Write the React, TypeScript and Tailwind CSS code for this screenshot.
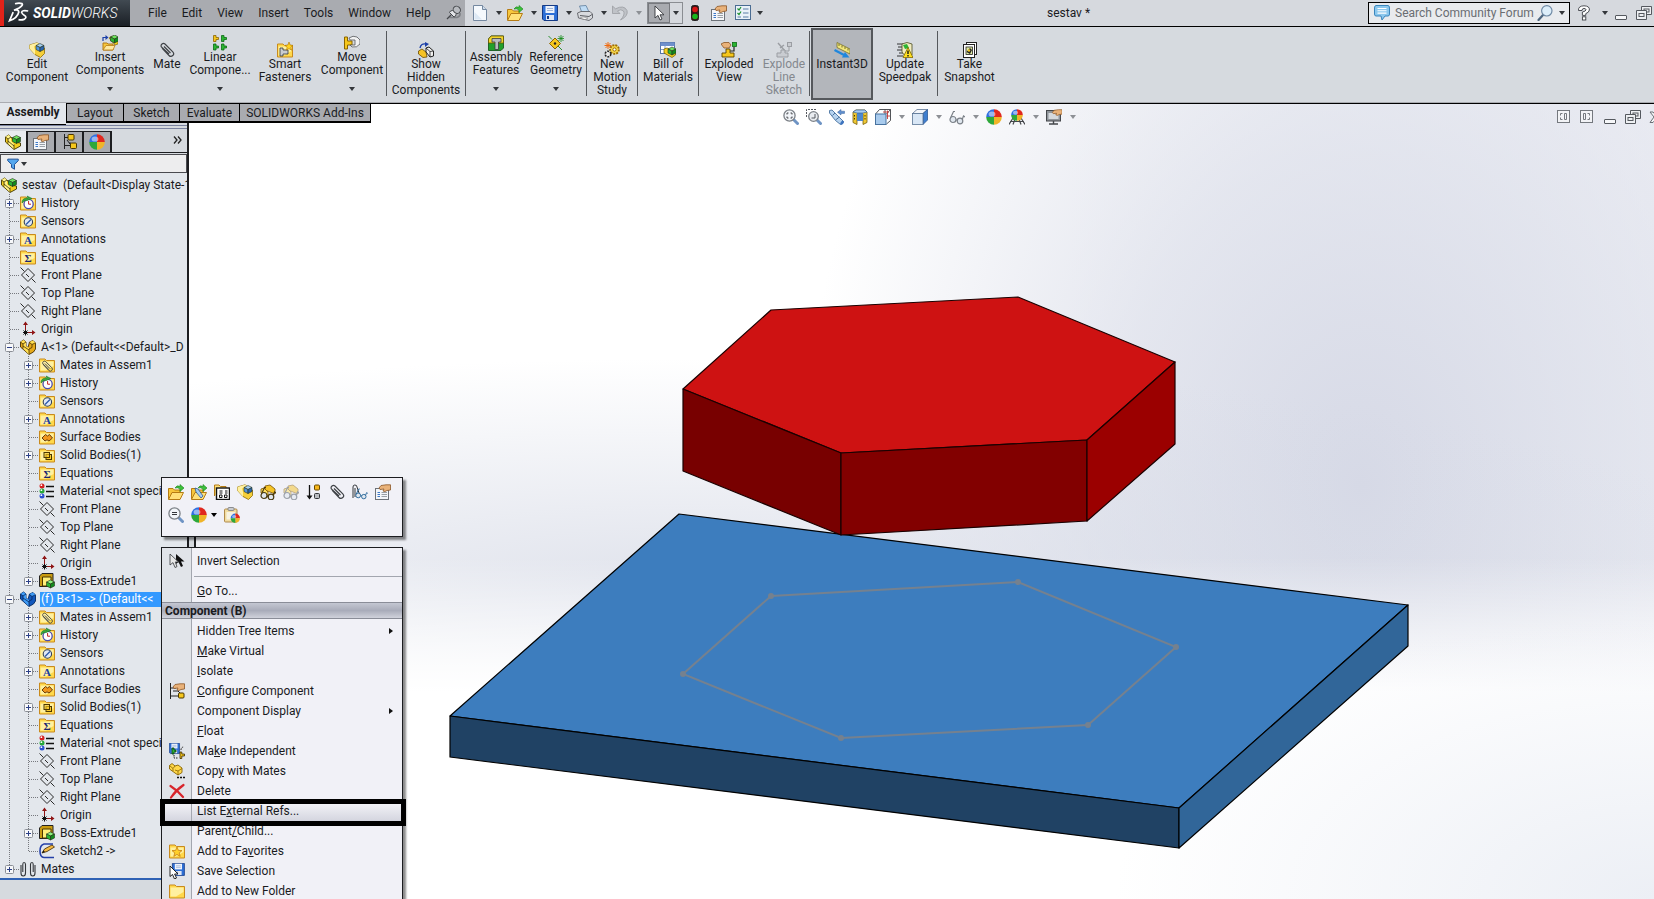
import { useState } from "react";
import type { ReactNode } from "react";

const partBody = "M0.5 3 L3.5 1 L6 3 V7 L8 8.5 L9.5 3 L13 1.5 L15.5 4 V10 L13.5 13 L9 15.5 L0.5 8 Z";

function Bracket({ light, mid, dark }: { light: string; mid: string; dark: string }) {
  return (
    <>
      <path d={partBody} fill={mid} stroke={dark} strokeWidth="0.9" />
      <path d="M0.5 3 L3.5 1 L6 3 V7 L9 9 V15.5 L3 9.5 V5 Z" fill={light} />
      <path d="M9.5 3 L13 1.5 L15.5 4 L12 5.5 Z" fill={light} />
      <path d="M0.5 3 L3 5 V9.5 M3 5 L6 3 M9 15 V10 L12 8.5 V5.5 L15 4 M12 5.5 L9.5 3.5 M3 7 L9 11" fill="none" stroke={dark} strokeWidth="0.8" />
    </>
  );
}

function Folder({ children }: { children?: ReactNode }) {
  return (
    <>
      <path d="M0.5 15 V2 H6 L7.5 3.5 H15.5 V15 Z" fill="#ffd84a" stroke="#c98a1c" />
      <path d="M1.5 13.5 V4.5 H14.5 V9 L7 13.5 Z" fill="#fff0a0" />
      {children}
    </>
  );
}

function Cube({ top, side, front, x = 0, y = 0 }: { top: string; side: string; front: string; x?: number; y?: number }) {
  return (
    <g transform={`translate(${x} ${y})`} stroke="#27331f" strokeWidth="0.6">
      <path d="M0 2 L4 0 L8 2 L4 4 Z" fill={top} />
      <path d="M0 2 L4 4 V8 L0 6 Z" fill={front} />
      <path d="M8 2 L4 4 V8 L8 6 Z" fill={side} />
    </g>
  );
}

function Ball() {
  return (
    <>
      <path d="M8 8 V0.2 A7.8 7.8 0 0 0 0.2 8 Z" fill="#2f6fe0" />
      <path d="M8 8 V0.2 A7.8 7.8 0 0 1 15.8 8 Z" fill="#e0281e" />
      <path d="M8 8 H15.8 A7.8 7.8 0 0 1 8 15.8 Z" fill="#f0b428" />
      <path d="M8 8 H0.2 A7.8 7.8 0 0 0 8 15.8 Z" fill="#2ea83a" />
      <ellipse cx="6" cy="5" rx="3.4" ry="2.6" fill="#fff" opacity="0.5" />
    </>
  );
}

function Hand() {
  return (
    <path
      d="M4 4 L6 1.5 L11 0.8 H15.5 V6 L12 6.5 L10 7.5 L8 7 L9 5 L5 5.5 Z"
      fill="#e9b27a"
      stroke="#8a5526"
      strokeWidth="0.8"
    />
  );
}

const plane = (
  <g fill="none" stroke="#2a2a2a">
    <path d="M1.5 8 L8 1.5 L14.5 8 L8 14.5 Z" />
    <path d="M0.5 0.5 L4.5 4.5 M11.5 11.5 L15.5 15.5 M6 7 L9 10" />
  </g>
);

const clip = (
  <g fill="none" stroke="#3f4246" strokeWidth="1.2">
    <path d="M3 6 L10 13.5 A2.6 2.6 0 0 0 13.8 9.8 L6 2 A2.4 2.4 0 0 0 2.4 5 L10 12 M5 4.5 L11.5 11" />
  </g>
);

const openFolder = (
  <>
    <path d="M0.5 15 V4.5 H5 L6.5 6 H12 V8" fill="#f6c63c" stroke="#b57b14" />
    <path d="M0.5 15.5 L4 8.5 H15.5 L12 15.5 Z" fill="#ffe17a" stroke="#b57b14" />
    <path d="M7 4 Q9 0.5 12 2.5 V0.5 L16 4 L12 7.5 V5 Q9.5 3 7 4 Z" fill="#3cc13b" stroke="#1b7f1c" strokeWidth="0.6" />
  </>
);

const disk = (
  <>
    <path d="M0.5 0.5 H15.5 V15.5 H2 L0.5 14 Z" fill="#2d6fd6" stroke="#153b86" />
    <rect x="3.5" y="1" width="9" height="7" fill="#eef3fb" />
    <path d="M5 3.5 H11 M5 5.5 H11" stroke="#8aa4cf" strokeWidth="0.8" />
    <rect x="4" y="10" width="8" height="5" fill="#dfe6f2" />
    <rect x="5" y="11" width="2" height="3" fill="#153b86" />
  </>
);

const pair = (
  <g stroke="#7a5200" strokeWidth="0.8">
    <path d="M5 2 L10 1 L15 5 V10 L10 8 L5 6 Z" fill="#f5c326" />
    <path d="M1 5 L4 4 L8 8 V13 L4 12 L1 9 Z" fill="#ffdf5e" />
  </g>
);

const glasses = (c: string) => (
  <g fill="#dfe6ee" stroke={c} strokeWidth="1.2">
    <circle cx="4" cy="10.5" r="3" />
    <circle cx="11" cy="12" r="2.8" />
    <path d="M1.5 9 L4.5 2.5 H6 M7 11 H8.5 M13.2 10.5 L14.5 7 L16 8" fill="none" />
  </g>
);

const loupe = (inner: ReactNode) => (
  <>
    <path d="M10.5 10.5 L14.5 14.5" stroke="#6f94c4" strokeWidth="3" strokeLinecap="round" />
    <circle cx="6.5" cy="6.5" r="5.6" fill="#f2f5f9" stroke="#7c8187" strokeWidth="1.3" />
    {inner}
  </>
);

const sheet = (
  <>
    <rect x="0.5" y="4.5" width="13" height="11" fill="#f4f6f9" stroke="#6d7278" />
    <path d="M2.5 8.5 H5 M2.5 10.5 H5 M2.5 12.5 H5" stroke="#3b78c8" />
    <path d="M6.5 8.5 H12 M6.5 10.5 H12 M6.5 12.5 H12" stroke="#9aa0a6" />
    <Hand />
  </>
);

const icons: Record<string, ReactNode> = {
  assembly: (
    <>
      <path d="M0.5 3 L3.5 1 L7 4 L9 8 L15.5 9 V12 L9 15.5 L0.5 8 Z" fill="#f3ce1f" stroke="#403400" strokeWidth="0.9" />
      <path d="M0.5 3 L3.5 1 L6 3 V7 L9 10 V15 L3 9.5 V5 Z" fill="#fff38a" />
      <path d="M0.5 3 L3 5 V9.5 M3 5 L6 3 M9 15 V10.5 M3 7 L9 12" fill="none" stroke="#403400" strokeWidth="0.8" />
      <Cube x={7.5} y={1.5} top="#6ee05e" side="#128a1c" front="#2bb532" />
    </>
  ),
  part: <Bracket light="#ffdf52" mid="#e5a91a" dark="#463000" />,
  partBlue: <Bracket light="#3f9bf5" mid="#1358bd" dark="#06285e" />,
  editComponent: (
    <>
      <path d="M0.5 3 L8 0.8 L15.5 6 V11.5 L11.5 15.5 L6 12.5 L0.5 6.5 Z" fill="#f5cf3a" stroke="#8a6a08" strokeWidth="0.8" />
      <path d="M0.5 3 L8 0.8 L10 2 L5 4.5 L6 8 V12.5 L0.5 6.5 Z" fill="#fff0a0" />
      <Cube x={7} y={1.5} top="#a7d0f5" side="#2a66b0" front="#5295dc" />
    </>
  ),
  insert: (
    <>
      <path d="M1 15 V8 H5 L6 9 H11 V15 Z" fill="#f6c63c" stroke="#b57b14" />
      <path d="M1 15 L4 10.5 H13 L11 15 Z" fill="#ffe9a0" stroke="#b57b14" strokeWidth="0.8" />
      <path d="M1 6 V2.5 H4" fill="none" stroke="#1c3fa8" strokeWidth="1.2" />
      <path d="M3.5 0 L6.5 2.5 L3.5 5 Z" fill="#1c3fa8" />
      <path d="M7 3 L10 1 L16 5 V9 L13 10 Z" fill="#f3ce1f" stroke="#6a5400" strokeWidth="0.6" />
      <Cube x={8.5} y={0} top="#6ee05e" side="#128a1c" front="#2bb532" />
    </>
  ),
  clip,
  pattern: (
    <g strokeWidth="0.8">
      <path d="M1.5 0.5 H4 V2.5 H6.5 V4.5 H4 V6.5 H1.5 Z" fill="#f6c71d" stroke="#8a6400" />
      <path d="M9.5 0.5 H12 V2.5 H14.5 V4.5 H12 V6.5 H9.5 Z" fill="#2bb532" stroke="#0c6b14" />
      <path d="M1.5 9 H4 V11 H6.5 V13 H4 V15 H1.5 Z" fill="#2bb532" stroke="#0c6b14" />
      <path d="M9.5 9 H12 V11 H14.5 V13 H12 V15 H9.5 Z" fill="#2bb532" stroke="#0c6b14" />
    </g>
  ),
  fastener: (
    <>
      <Folder />
      <path d="M3 6 H6 V8 H11 V12 H6 V14 H3 Z" fill="#c9ccd0" stroke="#33363a" strokeWidth="0.8" />
      <path d="M12 0 L13.2 3 L16 3.4 L13.8 5.4 L14.6 8.2 L12 6.6 L9.4 8.2 L10.2 5.4 L8 3.4 L10.8 3 Z" fill="#ffd21f" stroke="#a86f00" strokeWidth="0.6" />
    </>
  ),
  move: (
    <>
      <path d="M0.5 2 H3.5 V6 H8 V10 H3.5 V14 H0.5 Z" fill="#f6c71d" stroke="#8a6400" />
      <path d="M5 3 Q9 0 13 2 L16 5 V9 Q13 13 8 12 L6 10 H11 V5 H6 Z" fill="#f1f1f1" stroke="#55585c" strokeWidth="0.8" />
    </>
  ),
  showHidden: (
    <>
      <path d="M2 6 Q3 1 8 2" fill="none" stroke="#1c3fa8" strokeWidth="1.4" />
      <path d="M7 0 L11 2 L7 5 Z" fill="#1c3fa8" />
      <path d="M0.5 9 L4 7 L8 10 L9 15 L5 15.5 L0.5 12 Z" fill="#f5c326" stroke="#6a4a00" strokeWidth="0.8" />
      <path d="M8 6 L11 5 L15.5 9 V14 L12 15 L8 10 Z" fill="#eee" stroke="#222" />
      <path d="M8 6 L12 9.5 V15 M12 9.5 L15.5 9" fill="none" stroke="#222" strokeWidth="0.8" />
    </>
  ),
  asmFeatures: (
    <>
      <path d="M0.5 4 L3 1 H15.5 V13 L13 15.5 H0.5 Z" fill="#22a02a" stroke="#0a4e10" strokeWidth="0.8" />
      <path d="M0.5 8 V4 L3 1 H15.5 V8 Z" fill="#f3d62d" stroke="#6a5400" strokeWidth="0.8" />
      <path d="M4 3.5 H13 V7 H10.5 V14.5 H7 V7 H4 Z" fill="#b9bcc0" stroke="#3a3d40" strokeWidth="0.8" />
    </>
  ),
  refGeometry: (
    <>
      <path d="M7 3 L12.5 8.5 L7 14 L1.5 8.5 Z" fill="#f6c71d" stroke="#8a6400" />
      <path d="M0.5 1 L4 4.5 M10 11 L14 15" stroke="#2a8f2e" />
      <path d="M13 0 V7 M9.5 3.5 H16 M10.5 1 L15.5 6 M15.5 1 L10.5 6" stroke="#138a18" strokeWidth="0.8" />
      <circle cx="7" cy="8.5" r="1.2" fill="#222" />
    </>
  ),
  motion: (
    <>
      <circle cx="10.5" cy="7.5" r="4.4" fill="#f6d64a" stroke="#9c6c00" strokeWidth="1.8" strokeDasharray="2 1" />
      <circle cx="10.5" cy="7.5" r="1.6" fill="#fff" stroke="#9c6c00" />
      <circle cx="4" cy="12" r="2.8" fill="#e8e8e8" stroke="#222" strokeWidth="1.6" strokeDasharray="2 1" />
      <path d="M4 0 V7 M0.5 3.5 H7.5 M1.5 1 L6.5 6 M6.5 1 L1.5 6" stroke="#f06a10" />
    </>
  ),
  bom: (
    <>
      <rect x="0.5" y="0.5" width="14" height="11" fill="#fff" stroke="#5573a8" />
      <rect x="0.5" y="0.5" width="14" height="3.5" fill="#6f90cc" />
      <path d="M5 4 V11 M1 7.5 H14" stroke="#8aa0c4" />
      <path d="M4 7 L7 6 L15.5 10 V13 L12 15.5 L4 11 Z" fill="#f3ce1f" stroke="#6a5400" strokeWidth="0.7" />
      <Cube x={8} y={5} top="#6ee05e" side="#128a1c" front="#2bb532" />
    </>
  ),
  exploded: (
    <>
      <path d="M0 2 L3 0.5 H8 L10 3 L8 6 H3 Z" fill="#e9b27a" stroke="#8a5526" strokeWidth="0.8" />
      <rect x="11.5" y="0.5" width="4" height="4" fill="#2bb532" stroke="#0c6b14" strokeWidth="0.8" />
      <path d="M13 5 V9 H9" fill="none" stroke="#222" strokeWidth="1.2" />
      <path d="M5 7 H9 V11 H13 V15 H1 V11 H5 Z" fill="#f6c71d" stroke="#5a4300" strokeWidth="0.9" />
    </>
  ),
  explodeLine: (
    <g fill="#c9ccd1" stroke="#9b9ea3">
      <path d="M2 1 L9 9 M4 6 L8 3" fill="none" strokeWidth="1.4" />
      <rect x="11.5" y="0.5" width="4" height="4" />
      <path d="M13 5 V9 H9" fill="none" />
      <path d="M5 8 H9 V11 H12 V15 H1 V11 H5 Z" />
    </g>
  ),
  instant3d: (
    <>
      <path d="M3 0.5 L16 7 V12 L3 5.5 Z" fill="#f2e77a" stroke="#77702a" strokeWidth="0.8" />
      <path d="M5 2 V4 M8 3.5 V5.5 M11 5 V7 M14 6.5 V8.5" stroke="#55501e" strokeWidth="0.8" />
      <path d="M0.5 8 L10 13" stroke="#1f87dd" strokeWidth="2.4" />
      <path d="M8 15.5 L15.5 15.5 L11 10 Z" fill="#1f87dd" />
    </>
  ),
  speedpak: (
    <>
      <path d="M0 2 H6 M1 5 H6 M0 8 H6 M2 11 H6 M0 14 H6" stroke="#222" strokeWidth="0.9" />
      <path d="M5 2 L10 0.5 L15 2 V13 L8 14 L5 10 Z" fill="#f1ecc0" stroke="#4a4a20" strokeWidth="0.8" />
      <path d="M6 3 L10 2 L12 6 L8 7 Z" fill="#2bb532" />
      <path d="M11 5.5 L16 15.5 H6 Z" fill="#ffe01f" stroke="#806800" strokeWidth="0.8" />
      <path d="M11 8.5 V12 M11 13 V14.4" stroke="#111" strokeWidth="1.4" />
    </>
  ),
  snapshot: (
    <>
      <rect x="4.5" y="0.5" width="10" height="12" fill="#fff" stroke="#222" />
      <rect x="1.5" y="2.5" width="11" height="13" fill="#fff" stroke="#222" />
      <rect x="4" y="5" width="6.5" height="7.5" fill="#dfe9a0" stroke="#222" strokeWidth="0.8" />
      <path d="M4.5 10 L8 6 L10 8 L8 12 Z" fill="#222" />
      <circle cx="7" cy="8.5" r="1.2" fill="#f6c71d" />
    </>
  ),
  newDoc: (
    <>
      <path d="M1.5 0.5 H10.5 L14.5 4.5 V15.5 H1.5 Z" fill="#f5f9fd" stroke="#7488a0" />
      <path d="M10.5 0.5 V4.5 H14.5" fill="#cfdcea" stroke="#7488a0" />
      <path d="M2.5 14.5 V7 L10 14.5 Z" fill="#dce8f4" />
    </>
  ),
  openFolder,
  disk,
  printer: (
    <>
      <path d="M2.5 1 L9 0.5 L12 7 L5 8 Z" fill="#bfdcf5" stroke="#5f7d9c" strokeWidth="0.8" />
      <path d="M0.5 8 L4 6.5 H13 L15.5 9 V13 L12 15.5 L1.5 13 Z" fill="#d8dade" stroke="#5d6065" strokeWidth="0.9" />
      <path d="M3 10.5 L12 11.5 L15 9.5" fill="none" stroke="#5d6065" />
      <path d="M3 13 L8 14.5 L11 13 L6 12 Z" fill="#fff" stroke="#777" strokeWidth="0.5" />
    </>
  ),
  undo: (
    <path d="M0.5 1 V8.5 H8 L5.5 6 Q9 3.5 11.5 6 Q13.5 9.5 8.5 15 Q16.5 11 15 5.5 Q12 -0.5 3.5 3.8 Z" fill="#bfc2c7" stroke="#9a9da2" strokeWidth="0.8" />
  ),
  cursor: (
    <path d="M4 1 V13 L7 10.4 L9 15 L11 14 L9 9.8 H13 Z" fill="#fff" stroke="#33363a" strokeWidth="0.9" />
  ),
  light: (
    <>
      <rect x="4.5" y="0.5" width="7" height="15" rx="2" fill="#3a1414" stroke="#222" />
      <circle cx="8" cy="4.5" r="2.8" fill="#d81616" />
      <circle cx="8" cy="11.5" r="2.8" fill="#18b81e" />
    </>
  ),
  sheet,
  options: (
    <>
      <rect x="0.5" y="0.5" width="15" height="14" fill="#e9f1f8" stroke="#4a6c92" />
      <path d="M2.5 3.5 L4 5 L6 2 M2.5 8 L4 9.5 L6 6.5" fill="none" stroke="#1b8f2c" strokeWidth="1.2" />
      <path d="M8 4 H13.5 M8 8 H13.5 M8 12 H13.5 M2.5 12 H6" stroke="#5b7ea6" strokeWidth="1.2" />
    </>
  ),
  pin: (
    <>
      <path d="M3.5 12.5 H11 Q14.5 11.5 14 8" fill="none" stroke="#7d8085" strokeWidth="1.6" />
      <path d="M1 14 L5 10" stroke="#44474b" strokeWidth="1.2" />
      <path d="M3.5 7.5 L8 12 Q10 11.5 10 9.5 L13.5 6 Q13.5 2.5 10 2 L6.5 5.5 Q4 5.5 3.5 7.5 Z" fill="#e3e5e8" stroke="#44474b" />
      <ellipse cx="10.8" cy="4.8" rx="3.4" ry="3.8" fill="#b8bbc0" stroke="#44474b" transform="rotate(-45 10.8 4.8)" />
    </>
  ),
  bubble: (
    <>
      <path d="M2 0.5 H14 Q15.5 0.5 15.5 3 V9 Q15.5 11 14 11 H11 L8 15 L7 11 H2 Q0.5 11 0.5 9 V3 Q0.5 0.5 2 0.5 Z" fill="#8cc8ee" stroke="#3a86bd" />
      <path d="M3.5 3.5 H12.5 M3.5 5.8 H12.5 M3.5 8.1 H12.5" stroke="#fff" strokeWidth="1.1" />
    </>
  ),
  search: (
    <>
      <path d="M6 10 L1.5 15" stroke="#4f6780" strokeWidth="2.2" strokeLinecap="round" />
      <circle cx="9.8" cy="5.8" r="5.2" fill="#ddeefa" stroke="#6f8aa5" strokeWidth="1.2" />
    </>
  ),
  help: (
    <g fill="#fff" stroke="#3c4045" strokeWidth="0.9">
      <path d="M2.5 5.5 Q2 1 8 0.8 Q13.8 1 13.4 5 Q13 7.5 9.8 8.6 V10.4 H6.4 V7 Q10 6.2 10 4.8 Q9.8 3.4 8 3.4 Q6 3.5 6 5.5 Z" />
      <rect x="6.4" y="11.8" width="3.4" height="3.2" />
    </g>
  ),
  minimize: <rect x="2.5" y="10.5" width="11" height="4" rx="0.5" fill="#f6f7f9" stroke="#55595f" />,
  restore: (
    <g fill="#eef0f3" stroke="#55595f">
      <path d="M5.5 1.5 H15.5 V9.5 H5.5 Z" />
      <rect x="8" y="4" width="5" height="3" />
      <path d="M0.5 5.5 H10.5 V14.5 H0.5 Z" />
      <rect x="3" y="8.5" width="5" height="3" />
    </g>
  ),
  close: (
    <path d="M2 3 H5 L8 6.5 L11 3 H14 L10 8 L14 13.5 H11 L8 10 L5 13.5 H2 L6 8 Z" fill="#f6f7f9" stroke="#6b6f75" />
  ),
  paneLeft: (
    <g fill="none" stroke="#74787e">
      <rect x="1.5" y="1.5" width="12" height="12" fill="#f2f3f6" />
      <path d="M6.5 4.5 H4.5 V6.5 M4.5 8.5 V10.5 H6.5 M8.5 4.5 H10.5 V10.5 H8.5 Z" />
    </g>
  ),
  paneRight: (
    <g fill="none" stroke="#74787e">
      <rect x="1.5" y="1.5" width="12" height="12" fill="#f2f3f6" />
      <path d="M8.5 4.5 H10.5 V6.5 M10.5 8.5 V10.5 H8.5 M4.5 4.5 H6.5 V10.5 H4.5 Z" />
    </g>
  ),
  zoomFit: loupe(<path d="M4 5.5 V4 H5.5 M7.5 4 H9 V5.5 M9 7.5 V9 H7.5 M5.5 9 H4 V7.5" fill="none" stroke="#44474b" />),
  zoomArea: (
    <>
      <path d="M0.5 8 V0.5 H10" fill="none" stroke="#55595f" strokeDasharray="2 1" />
      <path d="M11 11 L14.5 14.5" stroke="#6f94c4" strokeWidth="3" strokeLinecap="round" />
      <circle cx="7.5" cy="7.5" r="4.8" fill="#e9ecf0" stroke="#7c8187" strokeWidth="1.3" />
      <path d="M9 5 V9 H5.5" fill="none" stroke="#55595f" />
    </>
  ),
  zoomOut: loupe(<path d="M4 5.5 H9 M4 7.5 H9" stroke="#33363a" strokeWidth="1.2" />),
  prevView: (
    <>
      <path d="M0.5 1.5 L3 1 L10 8 L14.5 12.5 Q14.5 15 11.5 15.5 L6.5 11.5 L0.5 4 Z" fill="#b7d3ef" stroke="#47729f" strokeWidth="0.9" />
      <path d="M3.5 6.5 L6 4 M6.5 11 L10.5 8" stroke="#47729f" />
      <ellipse cx="13" cy="13.8" rx="1.4" ry="2.2" transform="rotate(40 13 13.8)" fill="#3d74c0" />
      <path d="M8.5 3.2 L12 0.5 V2.2 H15.5 V4.4 H12 V6 Z" fill="#5f8fd0" stroke="#3a649c" strokeWidth="0.5" />
    </>
  ),
  section: (
    <>
      <path d="M1 3 L4 1 H13 L15 3 V13.5 L11 15.5 V5 L10 4 H6 L5 5 V15.5 L1 13.5 Z" fill="#f0c934" stroke="#77600a" strokeWidth="0.8" />
      <path d="M5 4 H11 V12 H5 Z" fill="#4d88cf" />
      <path d="M4 1 H13 L15 3 L11 4 H5 L1 3 Z" fill="#a8cdf2" stroke="#3a649c" strokeWidth="0.7" />
      <path d="M2.5 6 V7.5 M2.5 9 V10.5 M13 6 V7.5 M13 9 V10.5" stroke="#4a3a00" />
    </>
  ),
  viewOrient: (
    <>
      <path d="M4.5 0.5 H15.5 V11.5 L11.5 15 M0.5 5 L4.5 0.5 M11.5 5 L15.5 0.5 M10 0.5 V15" fill="none" stroke="#3f4246" strokeWidth="0.9" />
      <rect x="0.5" y="5" width="10.5" height="10.5" fill="#a9cbed" stroke="#47729f" />
      <path d="M8 3 H14 M12.5 1.5 V10 M11.5 7 H15" stroke="#c23a3a" strokeWidth="0.9" />
    </>
  ),
  display: (
    <>
      <path d="M0.5 4.5 L5 0.5 H15.5 L11 4.5 Z" fill="#f3f6fa" stroke="#5a7494" strokeWidth="0.8" />
      <path d="M11 4.5 L15.5 0.5 V11 L11 15.5 Z" fill="#3f7fd0" stroke="#2d5a98" strokeWidth="0.8" />
      <rect x="0.5" y="4.5" width="10.5" height="11" fill="#d9e7f6" stroke="#5a7494" strokeWidth="0.8" />
    </>
  ),
  glasses: glasses("#7b8188"),
  ball: <Ball />,
  scene: (
    <>
      <path d="M0 15.5 L4 9 H12 L16 15.5 M4 15.5 L6 10 M12 15.5 L10 10 M1 12.5 H15" fill="none" stroke="#44474b" strokeWidth="1.2" />
      <g transform="translate(2 0) scale(0.75)">
        <Ball />
      </g>
    </>
  ),
  viewSettings: (
    <>
      <rect x="0.5" y="1.5" width="14" height="10.5" fill="#8f949a" stroke="#44474b" />
      <rect x="2.5" y="4" width="10" height="6" fill="#d5d9de" />
      <path d="M7.5 12 V14.5 M3 15 H12" stroke="#44474b" strokeWidth="1.4" />
      <g transform="translate(3 0) scale(0.85)">
        <Hand />
      </g>
    </>
  ),
  config: (
    <>
      <path d="M3.5 0 V15 M3.5 3.5 H8 M3.5 11.5 H9" stroke="#222" fill="none" />
      <rect x="7" y="0.5" width="6" height="5.5" rx="1" fill="#f6c71d" stroke="#4a3600" />
      <rect x="9.5" y="9" width="6" height="5.5" rx="1" fill="#f6c71d" stroke="#4a3600" />
      <path d="M8 9 H10 M6 6 L9 10" stroke="#222" />
    </>
  ),
  filter: <path d="M1 1.5 H15 V3.5 L10 8.5 V15 L6 12.5 V8.5 L1 3.5 Z" fill="#54a7ee" stroke="#1a4c93" strokeWidth="1.3" />,
  history: (
    <Folder>
      <circle cx="8.6" cy="9" r="4.6" fill="#fff" stroke="#4a4bb0" strokeWidth="1.3" />
      <path d="M8.6 6 V9.2 H11" fill="none" stroke="#c02020" />
      <path d="M2 8 Q1.5 3 8 3 L7 1 L12 3.5 L7 5.5 Q4 5 2 8" fill="#3aa63e" stroke="#1c7a22" strokeWidth="0.6" />
    </Folder>
  ),
  sensors: (
    <Folder>
      <circle cx="8.4" cy="9" r="4.2" fill="#dfe8f5" stroke="#33415a" strokeWidth="1.1" />
      <path d="M6 11.5 L11 6.5" stroke="#2a57a8" strokeWidth="1.3" />
    </Folder>
  ),
  annotations: (
    <Folder>
      <text x="8" y="13" textAnchor="middle" fontSize="11" fontWeight="bold" fill="#1d3fa0" className="font-['Liberation_Serif',serif]">
        A
      </text>
    </Folder>
  ),
  equations: (
    <Folder>
      <text x="8" y="13" textAnchor="middle" fontSize="11" fontWeight="bold" fill="#1c2670" className="font-['Liberation_Serif',serif]">
        Σ
      </text>
    </Folder>
  ),
  plane,
  origin: (
    <>
      <path d="M5.5 12 V2 M5.5 11.5 H14" stroke="#8f1414" />
      <path d="M3 4 L5.5 0.5 L8 4 Z M12 9 L15.5 11.5 L12 14 Z" fill="#8f1414" />
      <path d="M3.5 9.5 L7.5 13.5 M7.5 9.5 L3.5 13.5 M5.5 9 V14.5 M3 11.5 H8" stroke="#111" />
    </>
  ),
  mateFolder: (
    <Folder>
      <g transform="translate(2 3) scale(0.78)">{clip}</g>
    </Folder>
  ),
  surface: (
    <Folder>
      <path d="M3 9 L6.5 5.5 L8.5 7 L10.5 5.5 L13.5 9 L10 12 L8 10.8 L6 12 Z" fill="#f0961c" stroke="#5a3000" strokeWidth="0.9" />
    </Folder>
  ),
  solid: (
    <Folder>
      <g fill="#f8c92c" stroke="#4a3600">
        <rect x="7" y="7.5" width="5.5" height="5" />
        <rect x="5" y="5.5" width="5.5" height="5" fillOpacity="0.6" />
      </g>
    </Folder>
  ),
  material: (
    <>
      <circle cx="3" cy="3" r="2.5" fill="#d42020" />
      <circle cx="3" cy="8" r="2.5" fill="#26a83a" />
      <circle cx="3" cy="13" r="2.5" fill="#2b4fd0" />
      <circle cx="2.4" cy="2.2" r="0.9" fill="#fff" />
      <circle cx="2.4" cy="7.2" r="0.9" fill="#fff" />
      <circle cx="2.4" cy="12.2" r="0.9" fill="#fff" />
      <path d="M7 3.5 H15 M7 8.5 H15 M7 13.5 H15" stroke="#111" strokeWidth="1.4" />
    </>
  ),
  extrude: (
    <>
      <path d="M0.5 3 L3 0.5 H14 V11 L12 13.5 H0.5 Z" fill="#c99b10" stroke="#222" />
      <path d="M3.5 4 H12 V13 H3.5 Z" fill="#fff07a" stroke="#4a3600" />
      <Cube x={7.5} y={7} top="#8df07e" side="#128a1c" front="#2bb532" />
    </>
  ),
  sketch: (
    <>
      <path d="M14 1 H5 Q1 2 1 8 Q1 14.5 5 14.5 H15" fill="none" stroke="#2440a8" strokeWidth="1.6" />
      <path d="M3 10 L5.5 6 L13 2 L15.5 4 L8 8.5 Z" fill="#f4b942" stroke="#3a2400" strokeWidth="0.8" />
      <path d="M3 10 L4.5 7.5 L6 9 Z" fill="#111" />
    </>
  ),
  mates: (
    <g fill="none" stroke="#33363a" strokeWidth="1.1">
      <path d="M1 4 V12 Q1 15 3.2 15 Q5.5 15 5.5 12 V3.5 Q5.5 1.5 4 1.5 Q2.8 1.5 2.8 3.5 V11" />
      <path d="M15 4 V12 Q15 15 12.8 15 Q10.5 15 10.5 12 V3.5 Q10.5 1.5 12 1.5 Q13.2 1.5 13.2 3.5 V11" />
    </g>
  ),
  openPos: (
    <>
      {openFolder}
      <path d="M4 4 L7 5 L12 12 L10 14 L5 8 Z" fill="#a7cdf0" stroke="#2d5a98" strokeWidth="0.8" />
    </>
  ),
  folderTree: (
    <>
      <path d="M0.5 12 V1 H5 L6.5 2.5 H12 V5" fill="#ffe17a" stroke="#b57b14" />
      <rect x="2.5" y="4" width="13" height="11.5" fill="#fff" stroke="#111" strokeWidth="1.4" />
      <path d="M5.5 7 H8.5 M11 7 H13.5 M11 9 H13.5 M5.5 9 H8.5" stroke="#111" />
      <path d="M5.5 11 H8 V13.5 H5.5 Z M10.5 11 H13 V13.5 H10.5 Z" fill="none" stroke="#111" />
    </>
  ),
  hidePart: (
    <>
      {pair}
      <g transform="translate(0 1)">{glasses("#4a3a10")}</g>
    </>
  ),
  transparency: (
    <g opacity="0.5">
      {pair}
      <g transform="translate(0 1)">{glasses("#4a5560")}</g>
    </g>
  ),
  suppress: (
    <>
      <path d="M3.5 1 V13" stroke="#111" strokeWidth="1.3" />
      <path d="M0.5 11.5 L3.5 15.5 L6.5 11.5 Z" fill="#111" />
      <rect x="8.5" y="1" width="5" height="5" rx="1" fill="#f6b71d" stroke="#6a4a00" />
      <rect x="8.5" y="9.5" width="5" height="5" rx="1" fill="#b8bbc0" stroke="#33363a" />
    </>
  ),
  viewMates: (
    <>
      <path d="M1 14 V3 Q1 1 2.8 1 Q5 1 5 3 L8 12 M3 13 V4" fill="none" stroke="#33363a" />
      <g transform="translate(3 3) scale(0.8)">{glasses("#2d6a9c")}</g>
    </>
  ),
  paste: (
    <>
      <rect x="0.5" y="2" width="12.5" height="13" rx="1" fill="#f1dca0" stroke="#b08a4a" />
      <rect x="4" y="0.5" width="6" height="3" rx="1" fill="#c9ccd0" stroke="#77797c" strokeWidth="0.8" />
      <path d="M2.5 5 H11 V12.5 H2.5 Z" fill="#f7f3e2" />
      <g transform="translate(6.5 6.5) scale(0.6)">
        <Ball />
      </g>
    </>
  ),
  invert: (
    <>
      <path d="M7 1 V11 L9.5 9 L12 14 L14 13 L12 8.5 H15.5 Z" fill="#111" />
      <path d="M1 1 V12 L4 9.6 L6 14.5 L8 13.6 L6.2 9 H9.5 Z" fill="#e8e8e8" stroke="#33363a" strokeWidth="0.8" />
    </>
  ),
  configure: (
    <>
      <path d="M1.5 0 V16 M1.5 5 H7 M1.5 13 H9 M4 8 H9 L11 10" fill="none" stroke="#222" />
      <Hand />
      <rect x="9.5" y="10" width="5.5" height="5" rx="1" fill="#f6c71d" stroke="#4a3600" />
    </>
  ),
  independent: (
    <>
      <g transform="scale(0.68)">{disk}</g>
      <path d="M3 5 H5 V7 H7 V9 H5 V11 H3 Z" fill="#2bb532" stroke="#063b0a" strokeWidth="0.8" />
      <path d="M11 9 H12.8 V11 H15.5 V13 H12.8 V15.5 H11 Z" fill="#f6c71d" stroke="#3a2a00" strokeWidth="0.8" />
      <path d="M12 7 Q12 4 15 4 M5 12 V15 H9" fill="none" stroke="#222" strokeDasharray="1.5 1" />
    </>
  ),
  copyMates: (
    <>
      <path d="M0.5 2.5 L3 0.5 L6 3 L9 2 L13 5 V9.5 L9 12 L6 10 L0.5 6 Z" fill="#ffd84a" stroke="#8a6400" strokeWidth="0.9" />
      <path d="M0.5 2.5 L4 5.5 L6 3 M4 5.5 V8 M6 7 L9 8 V12 M9 8 L13 5.5" fill="none" stroke="#8a6400" strokeWidth="0.8" />
      <path d="M8 14.5 H10 M11 14.5 H13 M14 14.5 H16" stroke="#111" strokeWidth="1.4" />
    </>
  ),
  delete: <path d="M1.5 3 Q8 7 14 14 M14.5 2 Q7 7 2 14.5" fill="none" stroke="#d8252b" strokeWidth="2.2" strokeLinecap="round" />,
  favorites: (
    <Folder>
      <path d="M8 4 L9.4 7.4 L13 7.6 L10.2 9.9 L11.2 13.4 L8 11.4 L4.8 13.4 L5.8 9.9 L3 7.6 L6.6 7.4 Z" fill="#ffcf2a" stroke="#c67f12" strokeWidth="0.8" />
    </Folder>
  ),
  saveSelection: (
    <>
      <g transform="translate(3 0) scale(0.8)">{disk}</g>
      <path d="M1 3 V13.5 L3.5 11.5 L5.5 16 L7.5 15 L5.6 11 H9 Z" fill="#fff" stroke="#111" strokeWidth="0.9" />
    </>
  ),
  folder: <Folder />,
};

function Icon({ name, className = "" }: { name: string; className?: string }) {
  return (
    <svg viewBox="0 0 16 16" className={`size-4 shrink-0 ${className}`} aria-hidden="true">
      {icons[name]}
    </svg>
  );
}

function Caret({ className = "text-[#33363a]" }: { className?: string }) {
  return (
    <svg viewBox="0 0 6 4" className={`h-1 w-1.5 shrink-0 ${className}`} aria-hidden="true">
      <path d="M0 0 H6 L3 4 Z" fill="currentColor" />
    </svg>
  );
}

function Logo() {
  return (
    <div className="flex h-full w-[130px] shrink-0 items-center border-l-4 border-[#e2231a] bg-linear-to-b from-[#414a52] to-[#1b2026] pl-1 text-white">
      <svg viewBox="0 0 21 22" className="h-[22px] w-[21px] shrink-0" fill="none" stroke="#fff" strokeWidth="1.7" aria-hidden="true">
        <path d="M7 1.8 Q11 0.6 14 1.6 Q15.5 3 11 6 L6 8.2 Q10.5 7.2 10.8 10 Q9.5 16 1.5 18.8 L5.2 10.2" />
        <path d="M20.2 9 Q14 7.8 13.6 10.4 Q14 12 16.5 13.4 Q19.5 15.4 16 17.4 Q13.5 18.4 10.5 17.6" />
      </svg>
      <span className="ml-1 text-sm leading-4 font-light italic">
        <b className="font-bold">SOLID</b>WORKS
      </span>
    </div>
  );
}

const menus = ["File", "Edit", "View", "Insert", "Tools", "Window", "Help"];

const quickTools = [
  { icon: "newDoc", label: "New" },
  { icon: "openFolder", label: "Open" },
  { icon: "disk", label: "Save" },
  { icon: "printer", label: "Print" },
  { icon: "undo", label: "Undo" },
];

function TitleBar() {
  return (
    <header className="flex h-[27px] shrink-0 items-center border-b border-black bg-[#d6d9de] pr-0.5">
      <Logo />
      <nav className="flex h-full w-[335px] shrink-0 items-center gap-[15px] bg-[#a9abb0] pl-[18px]">
        {menus.map((m) => (
          <button key={m}>{m}</button>
        ))}
        <button aria-label="Pin menu">
          <Icon name="pin" />
        </button>
      </nav>
      <div className="flex shrink-0 items-center pl-[7px]">
        {quickTools.map((t) => (
          <button key={t.icon} aria-label={t.label} className="flex w-[35px] items-center gap-2">
            <Icon name={t.icon} />
            <Caret className={t.icon === "undo" ? "text-[#8d9095]" : "text-[#33363a]"} />
          </button>
        ))}
        <button aria-label="Select" className="flex h-[22px] w-[36px] items-center border border-[#8a8d92]">
          <span className="flex h-full w-[22px] items-center justify-center border border-[#77797e] bg-[#a9abb0]">
            <Icon name="cursor" />
          </span>
          <span className="flex flex-1 justify-center">
            <Caret />
          </span>
        </button>
        <button aria-label="Rebuild" className="ml-1">
          <Icon name="light" />
        </button>
        <button aria-label="File properties" className="ml-2">
          <Icon name="sheet" />
        </button>
        <button aria-label="Options" className="ml-2 flex items-center gap-1.5">
          <Icon name="options" />
          <Caret />
        </button>
      </div>
      <h1 className="flex-1 pl-[284px]">sestav *</h1>
      <div className="flex h-[22px] w-[202px] shrink-0 items-center border border-black bg-[#e9ebee] px-[5px]">
        <Icon name="bubble" />
        <input
          aria-label="Search Community Forum"
          placeholder="Search Community Forum"
          className="ml-[5px] w-[142px] bg-transparent outline-none placeholder:text-[#6a6d72]"
        />
        <button aria-label="Search" className="flex items-center gap-1.5">
          <Icon name="search" />
          <Caret />
        </button>
      </div>
      <div className="flex shrink-0 items-center pl-1.5">
        <button aria-label="Help" className="flex items-center gap-2.5">
          <Icon name="help" />
          <Caret />
        </button>
        <button aria-label="Minimize" className="ml-[5px]">
          <Icon name="minimize" />
        </button>
        <button aria-label="Restore" className="ml-[7px]">
          <Icon name="restore" />
        </button>
      </div>
    </header>
  );
}

interface Command {
  icon: string;
  lines: string[];
  width: string;
  caret?: boolean;
  disabled?: boolean;
  pressed?: boolean;
}

const ribbonGroups: Command[][] = [
  [
    { icon: "editComponent", lines: ["Edit", "Component"], width: "w-[74px]" },
    { icon: "insert", lines: ["Insert", "Components"], width: "w-[72px]", caret: true },
    { icon: "clip", lines: ["Mate"], width: "w-[42px]" },
    { icon: "pattern", lines: ["Linear", "Compone..."], width: "w-16", caret: true },
    { icon: "fastener", lines: ["Smart", "Fasteners"], width: "w-[66px]" },
    { icon: "move", lines: ["Move", "Component"], width: "w-[68px]", caret: true },
  ],
  [{ icon: "showHidden", lines: ["Show", "Hidden", "Components"], width: "w-[78px]" }],
  [
    { icon: "asmFeatures", lines: ["Assembly", "Features"], width: "w-[60px]", caret: true },
    { icon: "refGeometry", lines: ["Reference", "Geometry"], width: "w-[60px]", caret: true },
  ],
  [{ icon: "motion", lines: ["New", "Motion", "Study"], width: "w-[50px]" }],
  [{ icon: "bom", lines: ["Bill of", "Materials"], width: "w-[60px]" }],
  [
    { icon: "exploded", lines: ["Exploded", "View"], width: "w-[60px]" },
    { icon: "explodeLine", lines: ["Explode", "Line", "Sketch"], width: "w-[50px]", disabled: true },
  ],
  [{ icon: "instant3d", lines: ["Instant3D"], width: "w-[60px]", pressed: true }],
  [{ icon: "speedpak", lines: ["Update", "Speedpak"], width: "w-16" }],
  [{ icon: "snapshot", lines: ["Take", "Snapshot"], width: "w-[63px]" }],
];

function RibbonButton({ cmd }: { cmd: Command }) {
  return (
    <button
      disabled={cmd.disabled}
      aria-pressed={cmd.pressed}
      className={`flex h-[70px] shrink-0 flex-col items-center leading-[13px] whitespace-nowrap ${cmd.width} ${
        cmd.caret ? "pt-1.5" : "pt-[13px]"
      } ${cmd.disabled ? "text-[#84888e]" : ""} ${
        cmd.pressed ? "ml-0.5 bg-[#b3b6bb] outline-2 -outline-offset-1 outline-[#55585c]" : ""
      }`}
    >
      <Icon name={cmd.icon} />
      {cmd.lines.map((l) => (
        <span key={l}>{l}</span>
      ))}
      {cmd.caret && (
        <span className="mt-auto pb-2">
          <Caret />
        </span>
      )}
    </button>
  );
}

function Ribbon() {
  return (
    <div className="flex h-[77px] shrink-0 overflow-hidden border-b border-black bg-[#d6dadf] pt-[2px] shadow-[inset_0_-1px_0_#a9abb0]">
      {ribbonGroups.map((group, i) => (
        <div key={i} className="flex">
          {group.map((cmd) => (
            <RibbonButton key={cmd.icon} cmd={cmd} />
          ))}
          {i < ribbonGroups.length - 1 && <span className="mt-0.5 h-[65px] w-px bg-[#55585c]" />}
        </div>
      ))}
    </div>
  );
}

const tabs = [
  { label: "Layout", width: "w-[57px]" },
  { label: "Sketch", width: "w-14" },
  { label: "Evaluate", width: "w-[60px]" },
  { label: "SOLIDWORKS Add-Ins", width: "w-[132px]" },
];

function CommandTabs() {
  return (
    <div role="tablist" className="absolute top-0 left-0 z-10 flex items-start">
      <button role="tab" aria-selected="true" className="-mt-px h-[22px] w-[66px] border-b border-black bg-[#e3e7ec] pb-1 font-bold">
        Assembly
      </button>
      {tabs.map((t) => (
        <button
          key={t.label}
          role="tab"
          aria-selected="false"
          className={`h-[19px] border-b-2 border-l border-black bg-[#a9abb0] last:border-r ${t.width}`}
        >
          {t.label}
        </button>
      ))}
    </div>
  );
}

interface TreeItem {
  icon: string;
  label: string;
  level: number;
  box?: "+" | "-";
  selected?: boolean;
  last?: boolean;
}

const partItems: TreeItem[] = [
  { icon: "mateFolder", label: "Mates in Assem1", level: 2, box: "+" },
  { icon: "history", label: "History", level: 2, box: "+" },
  { icon: "sensors", label: "Sensors", level: 2 },
  { icon: "annotations", label: "Annotations", level: 2, box: "+" },
  { icon: "surface", label: "Surface Bodies", level: 2 },
  { icon: "solid", label: "Solid Bodies(1)", level: 2, box: "+" },
  { icon: "equations", label: "Equations", level: 2 },
  { icon: "material", label: "Material <not speci", level: 2 },
  { icon: "plane", label: "Front Plane", level: 2 },
  { icon: "plane", label: "Top Plane", level: 2 },
  { icon: "plane", label: "Right Plane", level: 2 },
  { icon: "origin", label: "Origin", level: 2 },
];

const tree: TreeItem[] = [
  { icon: "assembly", label: "sestav  (Default<Display State-1", level: 0 },
  { icon: "history", label: "History", level: 1, box: "+" },
  { icon: "sensors", label: "Sensors", level: 1 },
  { icon: "annotations", label: "Annotations", level: 1, box: "+" },
  { icon: "equations", label: "Equations", level: 1 },
  { icon: "plane", label: "Front Plane", level: 1 },
  { icon: "plane", label: "Top Plane", level: 1 },
  { icon: "plane", label: "Right Plane", level: 1 },
  { icon: "origin", label: "Origin", level: 1 },
  { icon: "part", label: "A<1> (Default<<Default>_D", level: 1, box: "-" },
  ...partItems,
  { icon: "extrude", label: "Boss-Extrude1", level: 2, box: "+", last: true },
  { icon: "partBlue", label: "(f) B<1> -> (Default<<", level: 1, box: "-", selected: true },
  ...partItems,
  { icon: "extrude", label: "Boss-Extrude1", level: 2, box: "+" },
  { icon: "sketch", label: "Sketch2 ->", level: 2, last: true },
  { icon: "mates", label: "Mates", level: 1, box: "+", last: true },
];

function Branch({ arm, last, box }: { arm?: boolean; last?: boolean; box?: string }) {
  return (
    <svg viewBox="0 0 19 18" className="h-[18px] w-[19px] shrink-0" aria-hidden="true">
      <path d={last ? "M9.5 0 V9" : "M9.5 0 V18"} stroke="#77797e" strokeDasharray="1 1" />
      {arm && <path d="M10 9.5 H19" stroke="#77797e" strokeDasharray="1 1" />}
      {box && <rect x="5.5" y="5.5" width="8" height="8" rx="1" fill="#f7f8fa" stroke="#8b8f96" />}
      {box && <path d={box === "+" ? "M7 9.5 H12 M9.5 7 V12" : "M7 9.5 H12"} stroke="#2b3f86" />}
    </svg>
  );
}

function TreeRow({ item }: { item: TreeItem }) {
  return (
    <li className="flex h-[18px] items-center whitespace-pre">
      {item.level === 2 && <Branch />}
      {item.level > 0 &&
        (item.box ? (
          <button aria-label={`Toggle ${item.label}`}>
            <Branch arm last={item.last} box={item.box} />
          </button>
        ) : (
          <Branch arm last={item.last} />
        ))}
      <Icon name={item.icon} className="ml-px" />
      <span
        className={`ml-1 flex h-[15px] shrink-0 items-center pl-px ${item.selected ? "flex-1 bg-[#3399ff] text-white" : ""}`}
      >
        {item.label}
      </span>
    </li>
  );
}

const panelTabs = [
  { icon: "assembly", label: "Feature tree" },
  { icon: "sheet", label: "Properties" },
  { icon: "config", label: "Configurations" },
  { icon: "ball", label: "Appearances" },
];

function FeaturePanel() {
  const [filter, setFilter] = useState("");

  return (
    <aside className="flex w-[189px] shrink-0 flex-col overflow-hidden border-r-2 border-[#1c1d20] bg-[#d6dadf] pt-5">
      <div className="mt-px h-1 shrink-0 border-y border-[#7a83a0]" />
      <div className="mt-0.5 flex h-[22px] shrink-0 items-end justify-between border-b border-[#1c1d20]">
        <div className="flex border-r-2 border-[#1c1d20]">
          {panelTabs.map((t, i) => (
            <button
              key={t.icon}
              aria-label={t.label}
              className={`flex h-[21px] items-center justify-center ${
                i === 0 ? "w-[26px] bg-[#e9ecf0]" : "w-7 border-t border-l-2 border-[#1c1d20] bg-[#a9abb0]"
              }`}
            >
              <Icon name={t.icon} />
            </button>
          ))}
        </div>
        <button aria-label="Expand pane" className="mr-[5px] mb-2">
          <svg viewBox="0 0 9 8" className="h-2 w-[9px]" fill="none" stroke="#222" strokeWidth="1.3" aria-hidden="true">
            <path d="M1 0.5 L4 4 L1 7.5 M5 0.5 L8 4 L5 7.5" />
          </svg>
        </button>
      </div>
      <label className="mt-px flex h-[19px] shrink-0 items-center border border-[#4a4b50] bg-[#ededee] pl-1">
        <Icon name="filter" className="scale-75" />
        <Caret />
        <input
          aria-label="Filter tree"
          value={filter}
          onChange={(e) => setFilter(e.target.value)}
          className="w-full bg-transparent outline-none"
        />
      </label>
      <ul className="shrink-0 border-b-2 border-[#2f62b5] bg-[#e3e7ec] pt-[3px]">
        {tree.map((item, i) => (
          <TreeRow key={i} item={item} />
        ))}
      </ul>
    </aside>
  );
}

const viewTools = [
  { icon: "zoomFit", label: "Zoom to fit" },
  { icon: "zoomArea", label: "Zoom to area" },
  { icon: "prevView", label: "Previous view" },
  { icon: "section", label: "Section view" },
  { icon: "viewOrient", label: "View orientation", caret: true },
  { icon: "display", label: "Display style", caret: true },
  { icon: "glasses", label: "Hide/show items", caret: true },
  { icon: "ball", label: "Edit appearance" },
  { icon: "scene", label: "Apply scene", caret: true },
  { icon: "viewSettings", label: "View settings", caret: true },
];

const sketchPoints = [
  [771, 596],
  [1018, 582],
  [1176, 647],
  [1088, 725],
  [841, 738],
  [683, 674],
];

function Model() {
  return (
    <svg viewBox="189 104 1465 795" className="size-full" role="img" aria-label="Assembly model">
      <g stroke="#000" strokeWidth="1.2" strokeLinejoin="round">
        <path d="M679 514 L1408 605 L1179 808 L450 716 Z" fill="#3d7dbe" />
        <path d="M450 716 L1179 808 V848 L450 757 Z" fill="#204264" />
        <path d="M1179 808 L1408 605 V646 L1179 848 Z" fill="#316699" />
      </g>
      <polygon points={sketchPoints.map((p) => p.join(",")).join(" ")} fill="none" stroke="#75818f" strokeWidth="2" />
      {sketchPoints.map(([x, y]) => (
        <circle key={x} cx={x} cy={y} r="3" fill="#75818f" />
      ))}
      <g stroke="#1a0000" strokeWidth="1.2" strokeLinejoin="round">
        <path d="M771 310 L1018 297 L1175 362 L1087 440 L841 453 L683 389 Z" fill="#ce1212" />
        <path d="M683 389 L841 453 V535 L683 471 Z" fill="#780000" />
        <path d="M841 453 L1087 440 V521 L841 535 Z" fill="#820000" />
        <path d="M1087 440 L1175 362 V444 L1087 521 Z" fill="#9b0000" />
      </g>
    </svg>
  );
}

function Viewport() {
  return (
    <main className="relative min-w-0 flex-1 overflow-hidden bg-white bg-[radial-gradient(ellipse_at_100%_100%,#eceff5_0%,transparent_26%),linear-gradient(to_bottom,transparent_57%,#fff_74%),radial-gradient(ellipse_75%_28%_at_34%_60%,rgba(214,218,230,0.75)_0%,transparent_100%),radial-gradient(ellipse_38%_95%_at_80%_48%,#d6d9e6_0%,rgba(220,223,234,0.75)_45%,transparent_100%),linear-gradient(to_right,#fff_60%,#f0f1f6_100%)]">
      <Model />
      <div className="absolute inset-x-0 top-[5px] flex items-center justify-center pl-[22px]">
        {viewTools.map((t) => (
          <button key={t.icon} aria-label={t.label} className={`flex items-center gap-2 ${t.caret ? "w-[37px]" : "w-[23px]"}`}>
            <Icon name={t.icon} />
            {t.caret && <Caret className="text-[#8d9095]" />}
          </button>
        ))}
      </div>
      <div className="absolute top-[5px] -right-2.5 flex items-center gap-[7px]">
        <button aria-label="Split left">
          <Icon name="paneLeft" />
        </button>
        <button aria-label="Split right">
          <Icon name="paneRight" />
        </button>
        <button aria-label="Minimize document">
          <Icon name="minimize" />
        </button>
        <button aria-label="Restore document">
          <Icon name="restore" />
        </button>
        <button aria-label="Close document">
          <Icon name="close" />
        </button>
      </div>
      {/* grip of the panel splitter */}
      <div className="absolute top-[406px] left-0 h-14 w-[7px] border-r-2 border-[#1c1d20] bg-[#d6dadf]" />
    </main>
  );
}

const contextTools = [
  ["openFolder", "openPos", "folderTree", "editComponent", "hidePart", "transparency", "suppress", "clip", "viewMates", "sheet"],
  ["zoomOut", "ball", "paste"],
];

function ContextToolbar() {
  return (
    <div className="absolute top-[477px] left-[161px] z-20 flex h-[60px] w-[242px] flex-col gap-[7px] border border-[#1c1d20] bg-[#f1f1f7] pt-1.5 pl-1.5 shadow-[3px_3px_2px_rgba(0,0,0,0.45)]">
      {contextTools.map((row, i) => (
        <div key={i} className="flex gap-[7px]">
          {row.map((name) => (
            <button key={name} aria-label={name} className="flex items-center gap-1">
              <Icon name={name} />
              {i === 1 && name === "ball" && <Caret className="text-black" />}
            </button>
          ))}
        </div>
      ))}
    </div>
  );
}

interface MenuEntry {
  label: string;
  icon?: string;
  submenu?: boolean;
}

// "&" marks the mnemonic letter
const menuEntries: MenuEntry[] = [
  { label: "Hidden Tree Items", submenu: true },
  { label: "&Make Virtual" },
  { label: "&Isolate" },
  { label: "&Configure Component", icon: "configure" },
  { label: "Component Display", submenu: true },
  { label: "&Float" },
  { label: "Ma&ke Independent", icon: "independent" },
  { label: "Cop&y with Mates", icon: "copyMates" },
  { label: "Delete", icon: "delete" },
  { label: "List E&xternal Refs..." },
  { label: "Parent&/Child..." },
  { label: "Add to Fa&vorites", icon: "favorites" },
  { label: "Save Selection", icon: "saveSelection" },
  { label: "Add to New Folder", icon: "folder" },
];

function Mnemonic({ text }: { text: string }) {
  const at = text.indexOf("&");
  if (at < 0) return <>{text}</>;
  return (
    <>
      {text.slice(0, at)}
      <u>{text[at + 1]}</u>
      {text.slice(at + 2)}
    </>
  );
}

function MenuRow({ entry, height = "h-5" }: { entry: MenuEntry; height?: string }) {
  const active = entry.label.startsWith("List");

  return (
    <button
      role="menuitem"
      className={`relative flex w-full shrink-0 items-center text-left ${height} ${
        active ? "bg-linear-to-b from-[#f7f7fb] to-[#d4d5df]" : ""
      }`}
    >
      <span
        className={`flex h-full w-[30px] shrink-0 items-center border-r border-[#a3a6af] pl-[7px] ${active ? "" : "bg-[#e1e4e9]"}`}
      >
        {entry.icon && <Icon name={entry.icon} />}
      </span>
      <span className="flex-1 pl-[5px]">
        <Mnemonic text={entry.label} />
      </span>
      {entry.submenu && (
        <svg viewBox="0 0 4 6" className="mr-[9px] h-1.5 w-1" aria-hidden="true">
          <path d="M0 0 L4 3 L0 6 Z" fill="#111" />
        </svg>
      )}
      {active && <span className="absolute -top-0.5 -right-1 -bottom-[5px] -left-0.5 z-10 border-[5px] border-black" />}
    </button>
  );
}

function ContextMenu() {
  return (
    <div
      role="menu"
      className="absolute top-[547px] left-[161px] z-20 flex w-[242px] flex-col border border-[#1c1d20] bg-[#f1f1f7] shadow-[3px_3px_2px_rgba(0,0,0,0.45)]"
    >
      <MenuRow entry={{ label: "Invert Selection", icon: "invert" }} height="h-[26px]" />
      <div className="flex h-1.5 shrink-0">
        <span className="w-[30px] border-r border-[#a3a6af] bg-[#e1e4e9]" />
        <span className="ml-0.5 h-[3px] flex-1 border-b border-[#a3a6af]" />
      </div>
      <MenuRow entry={{ label: "&Go To..." }} height="h-[22px]" />
      <h2 className="flex h-[17px] shrink-0 items-center border-y border-[#8a8d98] bg-linear-to-b from-[#c4c7d2] via-[#a9acba] to-[#d0d2db] pl-[3px] font-bold">
        Component (B)
      </h2>
      <div className="flex h-0.5 shrink-0">
        <span className="w-[30px] border-r border-[#a3a6af] bg-[#e1e4e9]" />
      </div>
      {menuEntries.map((e) => (
        <MenuRow key={e.label} entry={e} />
      ))}
    </div>
  );
}

export default function App() {
  return (
    <div className="relative flex h-screen flex-col overflow-hidden bg-[#d6dadf] font-[Roboto,'Open_Sans',sans-serif] text-xs text-[#1a1b1e]">
      <TitleBar />
      <Ribbon />
      <div className="relative flex min-h-0 flex-1">
        <CommandTabs />
        <FeaturePanel />
        <Viewport />
      </div>
      <ContextToolbar />
      <ContextMenu />
    </div>
  );
}
